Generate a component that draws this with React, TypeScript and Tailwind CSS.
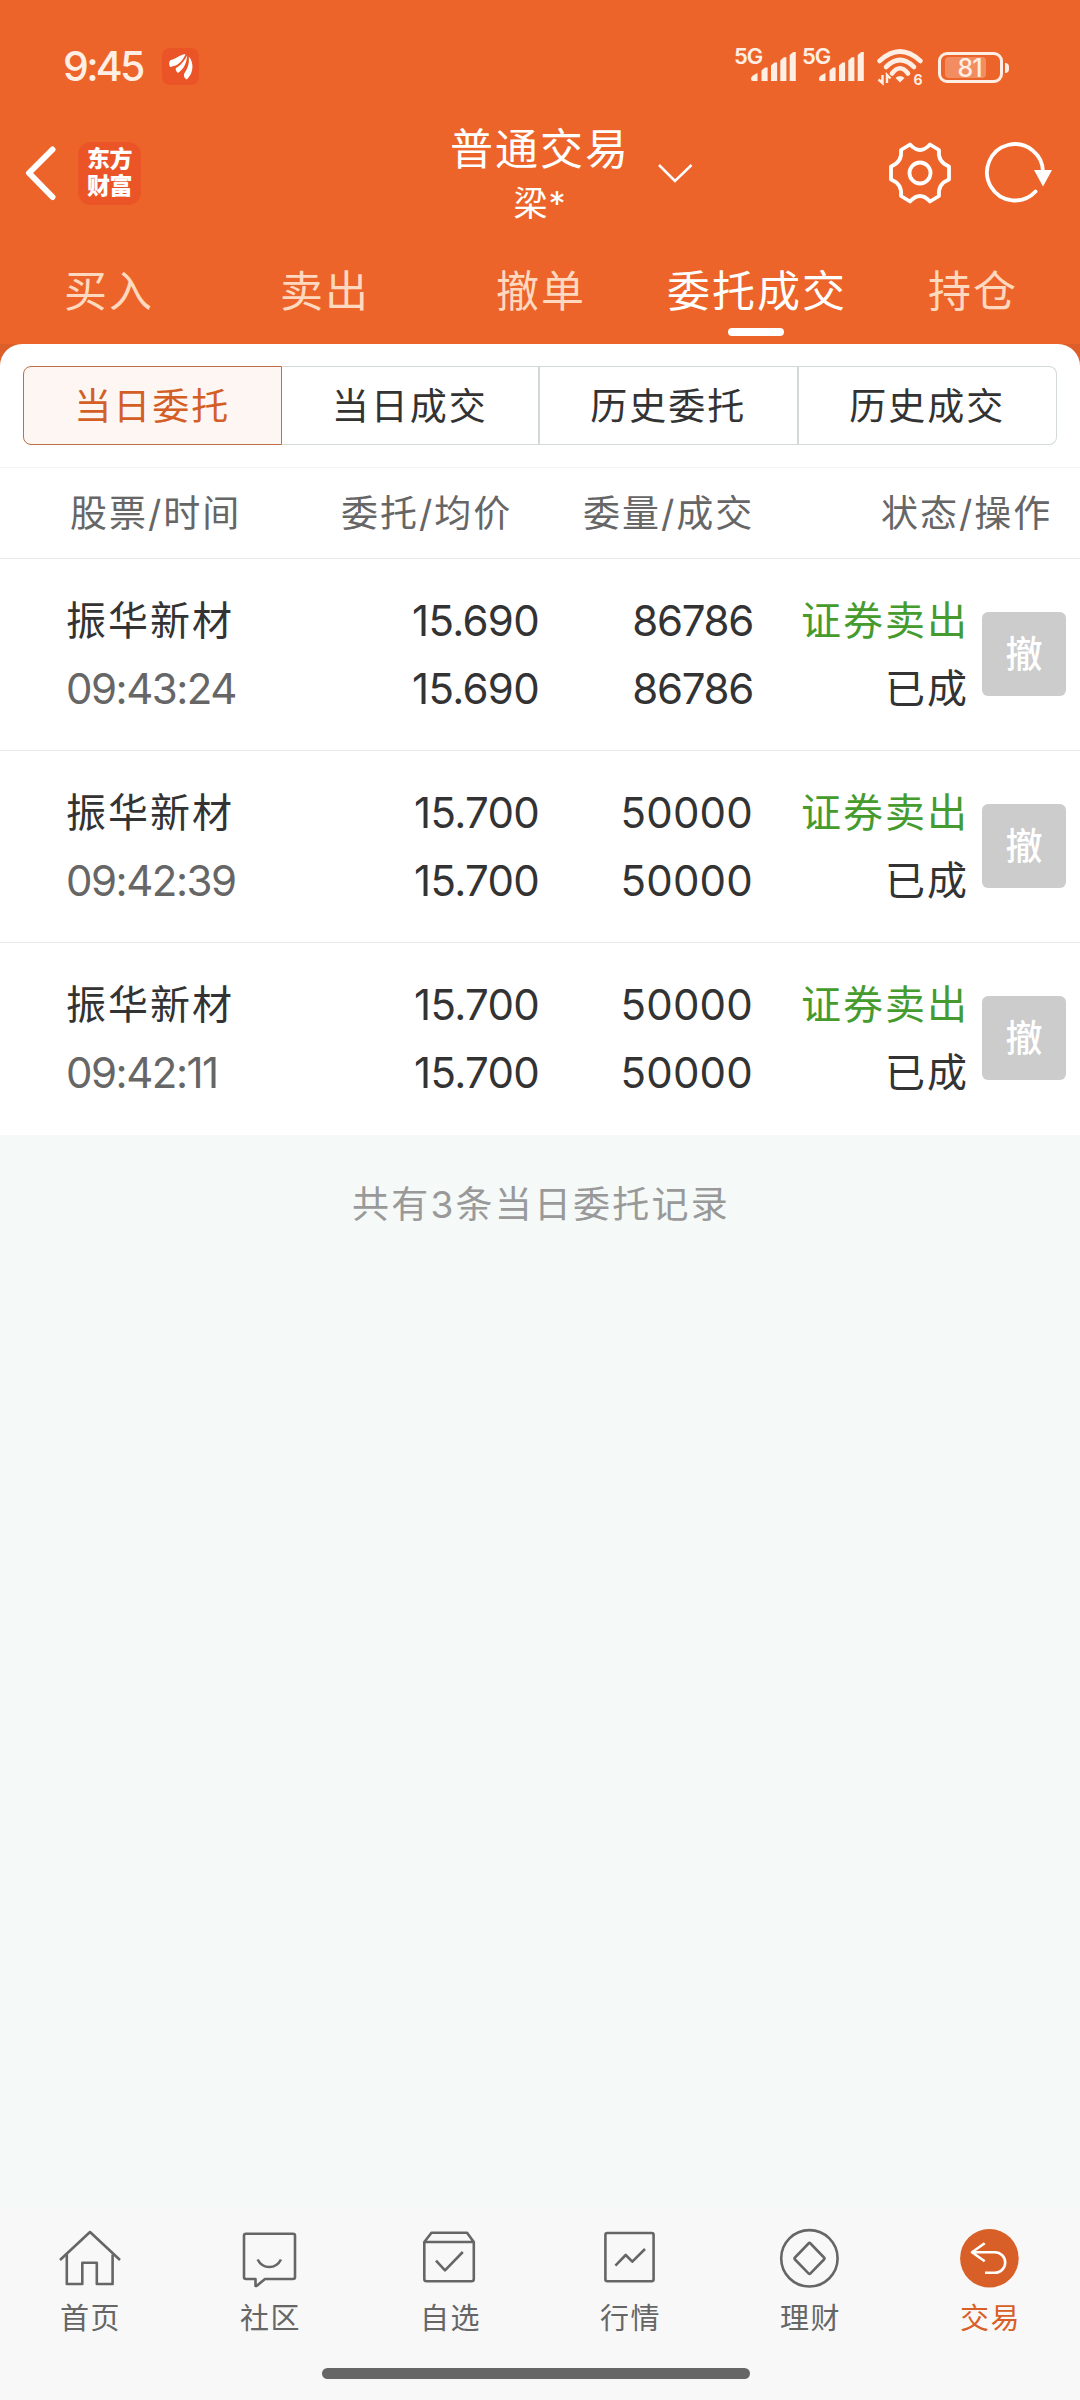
import type { ReactNode } from "react";
import clsx from "clsx";

const tabs = ["买入", "卖出", "撤单", "委托成交", "持仓"];
const segments = ["当日委托", "当日成交", "历史委托", "历史成交"];

const orders = [
  { name: "振华新材", time: "09:43:24", price: "15.690", avg: "15.690", amount: "86786", filled: "86786" },
  { name: "振华新材", time: "09:42:39", price: "15.700", avg: "15.700", amount: "50000", filled: "50000" },
  { name: "振华新材", time: "09:42:11", price: "15.700", avg: "15.700", amount: "50000", filled: "50000" },
];

function Signal() {
  return (
    <div className="flex h-[33px] w-[68px] items-start">
      <span className="w-[28px] text-[22px] leading-[16px] font-semibold tracking-[-1px]">5G</span>
      <svg className="mt-1 -ml-[11px] h-[29px] w-[46px] shrink-0" viewBox="0 0 46 29" fill="currentColor">
        <path d="M0 26.500Q0 25 2 23.500T6.500 21v8H2Q0 29 0 27z" />
        <path d="M10.500 18.500L14 15.500h2.600V29h-6.100z" />
        <path d="M20 13.500L23.500 10.500h2.600V29H20z" />
        <path d="M29.300 8.500L32.800 5.200h2.600V29h-6.100z" />
        <path d="M38.700 3L42.200 0h2.600v29h-6.100z" />
      </svg>
    </div>
  );
}

function StatusBar() {
  return (
    <div className="flex h-[111px] items-start pt-12 pl-[63px] text-[#ffeee4]">
      <span className="mt-[3px] text-[41px] leading-[30px] font-medium tracking-[-2.700px]">9:45</span>
      <div className="absolute top-12 left-[162px] flex size-[37px] items-center justify-center rounded-lg bg-[#ea5426]">
        <svg className="size-[37px]" viewBox="0 0 37 37" fill="#fff">
          <path d="M23.500 6C21 12 18 15.500 13.500 17.500C11 18 10.500 18.500 8 19C7 17 6.500 14 8.500 12C13 11.500 17 7 23.500 6z" />
          <path d="M25 7.500C25 14 22 21 16 25C14.500 24 13.500 22.500 13.700 20.300C18 18 22.500 13 25 7.500z" />
          <path d="M26.700 8.500C32 14 32 25 24.800 31.500C23 30.500 21.500 29 22.200 25.500C26 20 27.500 15 26.700 8.500z" />
        </svg>
      </div>
      <div className="ml-auto flex pr-[71px]">
        <Signal />
        <Signal />
        <svg className="ml-[7px] h-[37px] w-[47px] overflow-visible" viewBox="877 48 47 37" fill="none" stroke="currentColor" strokeWidth="4.600" strokeLinecap="round">
          <path d="M879.500 61Q900 42 920.500 61" />
          <path d="M886 67Q900 53 914 67" />
          <path d="M892 73.500Q900 63 908 73.500" />
          <path d="M895.500 78Q900 74 904.500 78L900 82.500z" fill="currentColor" stroke="none" />
          <path d="M882.500 75v8l-4-3.500M887 83v-8l3.500 3.500" strokeWidth="2.400" strokeLinecap="butt" />
          <text x="913.500" y="84.500" fill="currentColor" stroke="none" className="text-[14px] font-bold">6</text>
        </svg>
        <div className="mt-0.5 ml-[14px] flex items-center">
          <div className="relative flex h-[31px] w-[65px] items-center justify-center rounded-[9px] border-[3px] border-current">
            <div className="absolute top-0.5 left-1 h-[21px] w-[41px] rounded-sm bg-[#ffeee4]/30" />
            <span className="relative mt-px mr-0.5 text-[25px] leading-none font-medium tracking-[-1px]">81</span>
          </div>
          <div className="ml-0.5 h-[10px] w-1 rounded-r-sm bg-current" />
        </div>
      </div>
    </div>
  );
}

function TitleBar() {
  return (
    <div className="relative flex h-[124px] items-center justify-between text-white">
      <div className="flex items-center">
        <svg className="ml-[22px] h-14 w-9" viewBox="0 0 36 56" fill="none" stroke="currentColor" strokeWidth="6" strokeLinecap="round" strokeLinejoin="round">
          <path d="M30.500 4.500L7 28l23.500 24" />
        </svg>
        <div className="ml-[20px] flex h-[63px] w-[63px] flex-col items-center justify-center rounded-[13px] bg-[#ea5426] text-[23px] leading-[27px] font-black tracking-[-0.5px]">
          <span>东方</span>
          <span>财富</span>
        </div>
      </div>
      <div className="absolute inset-x-0 top-0 flex flex-col items-center pt-[13px]">
        <span className="text-[43px] leading-[50px] tracking-[2px]">普通交易</span>
        <span className="mt-[8px] text-[34px] leading-[44px] tracking-[1px]">梁*</span>
      </div>
      <svg className="absolute top-[52px] left-[657px] h-5 w-9" viewBox="0 0 36 20" fill="none" stroke="currentColor" strokeWidth="2.500">
        <path d="M2 2l16 16L34.500 2" />
      </svg>
      <div className="flex items-center gap-[31px] pr-[27px]">
        <svg className="size-[64px]" viewBox="-32 -32 64 64" fill="none" stroke="currentColor" strokeWidth="3.800" strokeLinejoin="round">
          <path d="M-10 -28.500Q0 -17.500 10 -28.500L19 -23Q17.500 -11 29 -6.500V6.500Q17.500 11 19 23L10 28.500Q0 17.500 -10 28.500L-19 23Q-17.500 11 -29 6.500V-6.500Q-17.500 -11 -19 -23z" />
          <circle r="10.500" />
        </svg>
        <svg className="h-[64px] w-[70px]" viewBox="-32 -32 70 64" fill="none" stroke="currentColor" strokeWidth="3.800">
          <path d="M28 0A28 28.200 0 1 0 20.500 18.500" strokeLinecap="round" />
          <path d="M19 -3H37L28 13.500z" fill="currentColor" stroke="none" />
        </svg>
      </div>
    </div>
  );
}

function Cell({ top, bottom, className }: { top: string; bottom: string; className: string }) {
  return (
    <div className={clsx("flex flex-col leading-[68px]", className)}>
      <span>{top}</span>
      <span>{bottom}</span>
    </div>
  );
}

function NavItem({ label, active, children }: { label: string; active?: boolean; children: ReactNode }) {
  return (
    <div className={clsx("flex w-[180px] flex-col items-center pt-[15px]", active ? "text-[#d85f27]" : "text-[#666]")}>
      <svg className="h-[66px] w-[72px]" viewBox="0 0 72 66" fill="none" stroke="currentColor" strokeWidth="2.600" strokeLinejoin="round">
        {children}
      </svg>
      <span className="mt-[7px] pl-px text-[29px] leading-[44px] tracking-[1.500px]">{label}</span>
    </div>
  );
}

export default function App() {
  return (
    <div className="flex h-[2400px] w-[1080px] flex-col overflow-hidden bg-[#f5f9f8] font-['Inter','Noto_Sans_CJK_SC',sans-serif] text-[#333]">
      <header className="relative h-[344px] bg-[#ec642a]">
        <StatusBar />
        <TitleBar />
        <nav className="grid h-[109px] grid-cols-5">
          {tabs.map((tab) => (
            <div
              key={tab}
              className={clsx(
                "flex flex-col items-center pt-[26px] text-[43px] leading-[60px] tracking-[2px] whitespace-nowrap",
                tab === "委托成交" ? "text-white" : "text-[#ffd9bf]"
              )}
            >
              <span className="pl-0.5">{tab}</span>
              {tab === "委托成交" && <div className="mt-[7px] h-2 w-14 rounded-full bg-white" />}
            </div>
          ))}
        </nav>
      </header>

      <div className="bg-[#dc5f29]">
        <div className="h-[123px] rounded-t-[22px] bg-white px-[23px] pt-[22px]">
          <div className="grid h-[79px] grid-cols-4">
            {segments.map((label, i) => (
              <div
                key={label}
                className={clsx(
                  "flex items-center justify-center border pt-0.5 text-[37px] tracking-[2px]",
                  i === 0
                    ? "rounded-l-lg border-[#bd7047] bg-[#fdf6f2] text-[#d35f27]"
                    : "border-l-0 border-[#d3d8d8]",
                  (i === 1 || i === 2) && "border-r-2",
                  i === 3 && "rounded-r-lg"
                )}
              >
                {label}
              </div>
            ))}
          </div>
        </div>
      </div>

      <div className="flex h-[92px] items-center border-y border-t-[#f4f4f4] border-b-[#eaeaea] bg-white pt-0.5 text-[37px] tracking-[2px] whitespace-nowrap text-[#666]">
        <span className="ml-[70px] w-[271px]">股票/时间</span>
        <span className="w-[242px]">委托/均价</span>
        <span className="w-[298px]">委量/成交</span>
        <span>状态/操作</span>
      </div>

      {orders.map((order, i) => (
        <div key={order.time} className={clsx("flex h-48 items-start bg-white pt-[27px] text-[42px]", i < 2 ? "border-b border-[#eaeaea]" : "-mb-px")}>
          <div className="flex w-[270px] flex-col pt-px pl-[66px] leading-[68px]">
            <span className="text-[40px] tracking-[2px]">{order.name}</span>
            <span className="tracking-[-1.500px] text-[#666]">{order.time}</span>
          </div>
          <Cell top={order.price} bottom={order.avg} className="w-[269px] items-end pt-px tracking-[-0.7px]" />
          <Cell
            top={order.amount}
            bottom={order.filled}
            className={clsx("w-[214px] items-end pt-px", order.amount === "50000" ? "tracking-[0.2px]" : "tracking-[-1.300px]")}
          />
          <div className="flex w-[216px] flex-col items-end pt-px text-[40px] leading-[68px] tracking-[2px]">
            <span className="text-[#459b2d]">证券卖出</span>
            <span>已成</span>
          </div>
          <button className="mt-[26px] ml-[13px] flex size-[84px] items-center justify-center rounded-md bg-[#ccc] pt-0.5 text-[37px] font-medium text-white">
            撤
          </button>
        </div>
      ))}

      <p className="mt-[41px] pl-0.5 text-center text-[37px] leading-[60px] tracking-[2.200px] text-[#999]">共有3条当日委托记录</p>

      <footer className="mt-auto h-[191px] bg-[#f8f8f8]">
        <div className="flex h-[159px]">
          <NavItem label="首页">
            <path d="M6 36L36 8l30 28" />
            <path d="M12.800 30.500V60H28.300V38.700H42.800V60H58.600V30.500" />
          </NavItem>
          <NavItem label="社区">
            <path d="M12 9.700H59Q61 9.700 61 11.700V53Q61 55 59 55H31L22.500 62H21.500V55H12Q10 55 10 53V11.700Q10 9.700 12 9.700z" />
            <path d="M23.600 35.500Q27.500 43 35.300 43T47 35.500" />
          </NavItem>
          <NavItem label="自选">
            <path d="M10.300 18L17.500 8.700H53L59.800 18V55Q59.800 57.300 57.500 57.300H12.600Q10.300 57.300 10.300 55zH59.800" />
            <path d="M22 36.700l9 9.600L48.800 28" />
          </NavItem>
          <NavItem label="行情">
            <rect x="11.400" y="9" width="48.200" height="48.300" rx="2" />
            <path d="M21.400 41.700L31.700 31l6.600 6.700L51 25" />
          </NavItem>
          <NavItem label="理财">
            <circle cx="35.400" cy="34.300" r="28.200" />
            <path d="M34.500 19.500Q35.500 18.500 36.500 19.500L50 33.500Q51 34.500 50 35.500L36.500 49.300Q35.500 50.300 34.500 49.300L21 35.500Q20 34.500 21 33.500z" />
          </NavItem>
          <NavItem label="交易" active>
            <circle cx="35.400" cy="34.300" r="29.300" fill="currentColor" stroke="none" />
            <path d="M30.700 19.300L18 28.300l12.700 9M18 28.300H41A10.200 10.200 0 0 1 41 48.700H31" stroke="#fff" />
          </NavItem>
        </div>
        <div className="ml-[322px] h-[11px] w-[428px] rounded-full bg-[#666]" />
      </footer>
    </div>
  );
}
